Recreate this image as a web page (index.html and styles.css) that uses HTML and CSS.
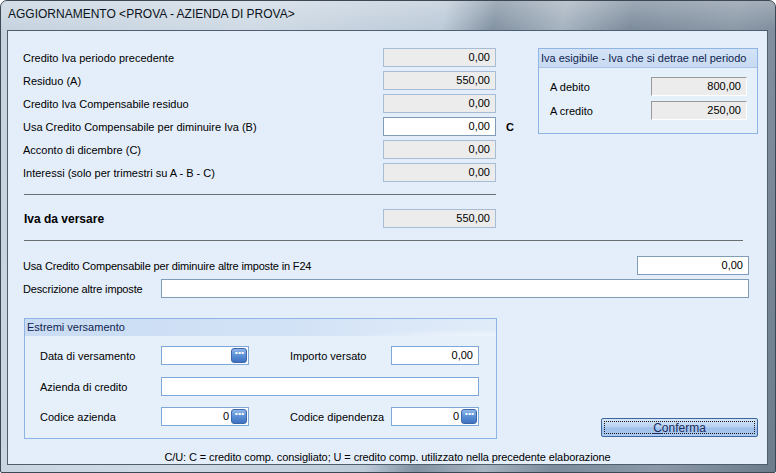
FILE: index.html
```html
<!DOCTYPE html>
<html>
<head>
<meta charset="utf-8">
<link rel="stylesheet" href="styles.css">
</head>
<body>
<div class="window">
  <div class="titlebar"><span class="title">AGGIORNAMENTO &lt;PROVA - AZIENDA DI PROVA&gt;</span></div>
  <div class="client">
    <div class="top">
      <div class="calc">
        <div class="row"><span class="lbl">Credito Iva periodo precedente</span><span class="fld ro">0,00</span><span class="mark"></span></div>
        <div class="row"><span class="lbl">Residuo (A)</span><span class="fld ro">550,00</span><span class="mark"></span></div>
        <div class="row"><span class="lbl">Credito Iva Compensabile residuo</span><span class="fld ro">0,00</span><span class="mark"></span></div>
        <div class="row"><span class="lbl">Usa Credito Compensabile per diminuire Iva (B)</span><span class="fld">0,00</span><span class="mark">C</span></div>
        <div class="row"><span class="lbl">Acconto di dicembre (C)</span><span class="fld ro">0,00</span><span class="mark"></span></div>
        <div class="row"><span class="lbl">Interessi (solo per trimestri su A - B - C)</span><span class="fld ro">0,00</span><span class="mark"></span></div>
        <div class="sep short"></div>
        <div class="row"><span class="lbl strong">Iva da versare</span><span class="fld ro">550,00</span><span class="mark"></span></div>
      </div>
      <div class="group iva">
        <div class="ghead">Iva esigibile - Iva che si detrae nel periodo</div>
        <div class="gbody">
          <div class="irow"><span class="ilbl">A debito</span><span class="fld sunk">800,00</span></div>
          <div class="irow"><span class="ilbl">A credito</span><span class="fld sunk">250,00</span></div>
        </div>
      </div>
    </div>
    <div class="sep wide"></div>
    <div class="line f24"><span class="lbl narrow">Usa Credito Compensabile per diminuire altre imposte in F24</span><span class="fld small">0,00</span></div>
    <div class="line desc"><span class="lbl narrow dlbl">Descrizione altre imposte</span><span class="fld grow"></span></div>
    <div class="bottom">
      <div class="group vers">
        <div class="ghead wave">Estremi versamento</div>
        <div class="vbody">
          <div class="vrow">
            <span class="vlbl">Data di versamento</span>
            <span class="fld pick"><span class="val"></span><span class="dots">&middot;&middot;&middot;</span></span>
            <span class="vlbl2">Importo versato</span>
            <span class="fld short2">0,00</span>
          </div>
          <div class="vrow">
            <span class="vlbl">Azienda di credito</span>
            <span class="fld long"></span>
          </div>
          <div class="vrow">
            <span class="vlbl">Codice azienda</span>
            <span class="fld pick"><span class="val">0</span><span class="dots">&middot;&middot;&middot;</span></span>
            <span class="vlbl2">Codice dipendenza</span>
            <span class="fld pick"><span class="val">0</span><span class="dots">&middot;&middot;&middot;</span></span>
          </div>
        </div>
      </div>
      <button class="btn"><span class="focus"><u>C</u>onferma</span></button>
    </div>
    <div class="footer">C/U: C = credito comp. consigliato; U = credito comp. utilizzato nella precedente elaborazione</div>
  </div>
</div>
</body>
</html>
```

FILE: styles.css
```css
* { box-sizing: border-box; }
html, body { margin: 0; padding: 0; }
body {
  width: 776px;
  height: 473px;
  overflow: hidden;
  background: #ffffff;
  font-family: "Liberation Sans", Arial, sans-serif;
  font-size: 11px;
  color: #000;
}
.window {
  width: 776px;
  height: 473px;
  border: 1px solid #3c4854;
  border-radius: 7px 7px 2px 2px;
  background:
    linear-gradient(100deg, #c6d3df 0%, #cfdae5 30%, #bccad8 52%, #8292a2 58%, #a6b3c0 66%, #7c8c9c 74%, #8a98a7 86%, #6d7c8b 100%);
  display: flex;
  flex-direction: column;
  overflow: hidden;
}
.titlebar {
  height: 29px;
  flex: none;
  padding: 6px 0 0 7px;
  background: linear-gradient(to bottom, rgba(255,255,255,0.25), rgba(255,255,255,0));
}
.title {
  font-family: "Liberation Sans", Arial, sans-serif;
  font-size: 12px;
  color: #0c1420;
}
.client {
  margin: 0 7px 7px 6px;
  height: 436px;
  border: 1px solid #4f5e6c;
  background: #e4eefa;
  overflow: hidden;
  display: flex;
  flex-direction: column;
}
.top {
  display: flex;
  padding: 17px 0 0 15px;
}
.calc {
  width: 515px;
  display: flex;
  flex-direction: column;
  gap: 4px;
}
.row {
  display: flex;
  align-items: center;
  height: 19px;
}
.lbl { flex: 1; white-space: nowrap; }
.strong { font-weight: bold; font-size: 12px; padding-left: 1px; }
.mark { width: 42px; padding-left: 10px; font-weight: bold; }
.fld {
  height: 19px;
  width: 113px;
  background: #fff;
  border: 1px solid #7f9db9;
  text-align: right;
  padding: 0 5px 0 4px;
  line-height: 17px;
  white-space: nowrap;
  flex: none;
}
.fld.ro {
  background: #ececec;
  border-color: #a7bdd6;
}
.sep {
  height: 1px;
  background: #6a6e73;
  flex: none;
}
.sep.short { margin: 8px 42px 10px 1px; }
.sep.wide { margin: 12px 24px 0 16px; }
.group {
  border: 1px solid #8db4e4;
  background: #e6f0fb;
}
.iva {
  width: 220px;
  align-self: flex-start;
}
.ghead {
  height: 19px;
  line-height: 18px;
  padding-left: 2px;
  color: #0f2350;
  font-size: 11px;
  background: linear-gradient(to bottom, #d4e3f6, #c8daf2);
  border-bottom: 1px solid #a9c4e8;
  white-space: nowrap;
}
.gbody {
  padding: 9px 10px 13px 11px;
  display: flex;
  flex-direction: column;
  gap: 5px;
}
.irow { display: flex; align-items: center; height: 19px; }
.ilbl { width: 101px; }
.fld.sunk {
  width: 96px;
  background: #ececec;
  border-color: #9a9a9a #ffffff #ffffff #9a9a9a;
}
.line {
  display: flex;
  align-items: center;
  height: 19px;
  padding: 0 18px 0 15px;
}
.f24 { margin-top: 15px; }
.desc { margin-top: 4px; }
.narrow { letter-spacing: -0.16px; font-size: 11px; }
.dlbl { flex: none; width: 138px; }
.fld.small { width: 112px; }
.fld.grow { flex: 1; width: auto; }
.bottom {
  display: flex;
  align-items: flex-end;
  margin-top: 20px;
  padding-left: 16px;
}
.vers { width: 473px; }
.ghead.wave {
  height: 17px;
  line-height: 16px;
  border-bottom: none;
  font-size: 11px;
  background:
    radial-gradient(ellipse 180px 14px at 95% 115%, rgba(255,255,255,0.55), rgba(255,255,255,0) 70%),
    linear-gradient(to right, #c9dcf3 0%, #d2e2f6 55%, #e1ecf9 100%);
}
.vbody {
  padding: 10px 17px 12px 15px;
  display: flex;
  flex-direction: column;
  gap: 11px;
}
.vrow { display: flex; align-items: center; height: 19px; }
.vrow:nth-child(2) { margin-top: 1px; }
.vlbl { width: 121px; flex: none; font-size: 11px; }
.vlbl2 { width: 101px; margin-left: 41px; flex: none; font-size: 11px; }
.fld.pick {
  width: 88px;
  border-color: #7fa7d9;
  display: flex;
  align-items: center;
  padding: 0 1px 0 4px;
}
.fld.short2 { width: 88px; border-color: #7fa7d9; }
.fld.long { width: 318px; border-color: #7fa7d9; }
.val { flex: 1; text-align: right; padding-right: 2px; }
.dots {
  width: 16px;
  height: 15px;
  border-radius: 3px;
  background: linear-gradient(to bottom, #8fb6ea 0%, #5b8fd6 50%, #3e72c0 100%);
  border: 1px solid #3c68aa;
  color: #fff;
  font-weight: bold;
  font-size: 11px;
  line-height: 10px;
  text-align: center;
  letter-spacing: -1px;
  font-family: "DejaVu Sans", sans-serif;
}
.btn {
  margin: 0 9px 2px auto;
  width: 157px;
  height: 19px;
  padding: 2px;
  border: 1px solid #3a64a0;
  border-radius: 2px;
  background: linear-gradient(to bottom, #d7e6f8 0%, #b8d1f1 45%, #9fc0ec 55%, #aecbef 100%);
  font-family: "Liberation Sans", Arial, sans-serif;
  font-size: 12px;
  color: #1b2c5c;
  cursor: default;
}
.btn .focus {
  display: block;
  height: 13px;
  line-height: 12px;
  border: 1px dotted #1b1b1b;
}
.btn u { text-decoration: underline; }
.footer {
  margin-top: 12px;
  height: 13px;
  line-height: 13px;
  text-align: center;
  font-size: 11px;
  letter-spacing: -0.1px;
  white-space: nowrap;
}
```
